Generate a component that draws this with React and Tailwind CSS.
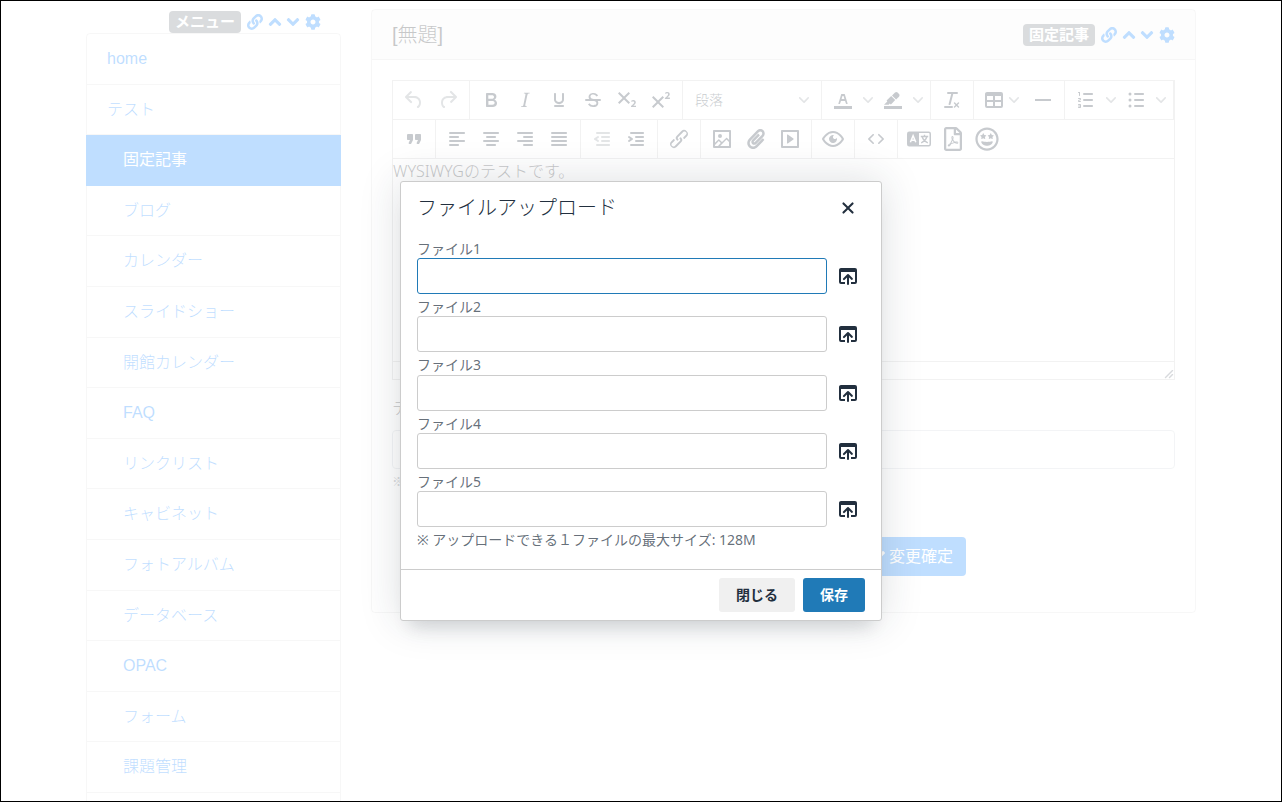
import { FaLink, FaAngleUp, FaAngleDown, FaCog, FaRegFilePdf, FaRegGrinStars, FaPaperclip, FaCheck } from "react-icons/fa";

const bar = "c.6 0 1 .4 1 1s-.4 1-1 1";

const PATHS = {
  undo: ["M6.4 8H12c3.7 0 6.2 2 6.8 5.1.6 2.7-.4 5.6-2.3 6.8a1 1 0 0 1-1-1.8c1.1-.6 1.8-2.7 1.4-4.6-.5-2.1-2.1-3.5-4.9-3.5H6.4l3.3 3.3a1 1 0 1 1-1.4 1.4l-5-5a1 1 0 0 1 0-1.4l5-5a1 1 0 0 1 1.4 1.4L6.4 8Z"],
  redo: ["M17.6 10H12c-2.8 0-4.4 1.4-4.9 3.5-.4 2 .3 4 1.4 4.6a1 1 0 1 1-1 1.8c-2-1.2-2.9-4.1-2.3-6.8.6-3 3-5.1 6.8-5.1h5.6l-3.3-3.3a1 1 0 1 1 1.4-1.4l5 5a1 1 0 0 1 0 1.4l-5 5a1 1 0 0 1-1.4-1.4l3.3-3.3Z"],
  bold: ["M7.8 19c-.3 0-.5 0-.6-.2l-.2-.5V5.7c0-.2 0-.4.2-.5l.6-.2h5c1.5 0 2.7.3 3.5 1 .7.6 1.1 1.4 1.1 2.5a3 3 0 0 1-.6 1.9c-.4.6-1 1-1.6 1.2.4.1.9.3 1.3.6s.8.7 1 1.2c.4.4.5 1 .5 1.6 0 1.3-.4 2.3-1.3 3-.8.7-2.1 1-3.8 1H7.8Zm5-8.3c.6 0 1.2-.1 1.6-.5.4-.3.6-.7.6-1.3 0-1.1-.8-1.7-2.3-1.7H9.3v3.5h3.4Zm.5 6c.7 0 1.3-.1 1.7-.4.4-.4.6-.9.6-1.5s-.2-1-.7-1.4c-.4-.3-1-.4-2-.4H9.4v3.8h4Z"],
  italic: ["m16.7 4.7-.1.9h-.3c-.6 0-1 0-1.4.3-.3.3-.4.6-.5 1.1l-2.1 9.8v.6c0 .5.4.8 1.4.8h.2l-.2.8H8l.2-.8h.2c1.1 0 1.8-.5 2-1.5l2-9.8.1-.5c0-.6-.4-.8-1.4-.8h-.3l.2-.9h5.8Z"],
  underline: ["M16 5c.6 0 1 .4 1 1v5.5a4 4 0 0 1-.4 1.8l-1 1.4a5.3 5.3 0 0 1-5.5 1 5 5 0 0 1-1.6-1c-.5-.4-.8-.9-1.1-1.4a4 4 0 0 1-.4-1.8V6c0-.6.4-1 1-1s1 .4 1 1v5.5c0 .3 0 .6.2 1l.6.7a3.3 3.3 0 0 0 2.2.8 3.4 3.4 0 0 0 2.2-.8c.3-.2.4-.5.6-.8l.2-.9V6c0-.6.4-1 1-1ZM8 17h8c.6 0 1 .4 1 1s-.4 1-1 1H8a1 1 0 0 1 0-2Z"],
  strike: [
    "M15.6 8.5c-.5-.7-1-1.1-1.3-1.3-.6-.4-1.3-.6-2-.6-2.7 0-2.8 1.7-2.8 2.1 0 1.6 1.8 2 3.2 2.3 4.4.9 4.6 2.8 4.6 3.9 0 1.4-.7 4.1-5 4.1A6.2 6.2 0 0 1 7 16.4l1.5-1.1c.4.6 1.6 2 3.7 2 1.6 0 2.5-.4 3-1.2.4-.8.3-2-.8-2.6-.7-.4-1.6-.7-2.9-1-1-.2-3.9-.8-3.9-3.6C7.6 6 10.3 5 12.4 5c2.9 0 4.2 1.6 4.7 2.4l-1.5 1.1Z",
    "M5 11h14a1 1 0 0 1 0 2H5a1 1 0 0 1 0-2Z",
  ],
  subscript: ["m10.4 10 4.6 4.6-1.4 1.4L9 11.4 4.4 16 3 14.6 7.6 10 3 5.4 4.4 4 9 8.6 13.6 4 15 5.4 10.4 10ZM21 19h-5v-1l1-.8 1.7-1.6c.3-.4.5-.8.5-1.2 0-.3 0-.6-.2-.7-.2-.2-.5-.3-.9-.3a2 2 0 0 0-.8.2l-.7.3-.4-1.1 1-.6 1.2-.2c.8 0 1.4.3 1.8.7.4.4.6.9.6 1.5s-.2 1.1-.5 1.6a8 8 0 0 1-1.3 1.3l-.6.6h2.6V19Z"],
  superscript: ["M15 9.4 10.4 14l4.6 4.6-1.4 1.4L9 15.4 4.4 20 3 18.6 7.6 14 3 9.4 4.4 8 9 12.6 13.6 8 15 9.4Zm5.9 1.6h-5v-1l1-.8 1.7-1.6c.3-.5.5-.9.5-1.3 0-.3 0-.5-.2-.7-.2-.2-.5-.3-.9-.3l-.8.2-.7.4-.4-1.2c.2-.2.5-.4 1-.5.3-.2.8-.2 1.2-.2.8 0 1.4.2 1.8.6.4.4.6 1 .6 1.6 0 .5-.2 1-.5 1.5l-1.3 1.4-.6.5h2.6V11Z"],
  textColor: [
    "M3 18h18v3H3z",
    "M8.7 16h-.8a.5.5 0 0 1-.5-.6l2.7-9c.1-.3.3-.4.5-.4h2.8c.2 0 .4.1.5.4l2.7 9a.5.5 0 0 1-.5.6h-.8a.5.5 0 0 1-.4-.4l-.7-2.2c0-.3-.3-.4-.5-.4h-3.4c-.2 0-.4.1-.5.4l-.7 2.2c0 .3-.2.4-.4.4Zm2.6-7.6-.6 2a.5.5 0 0 0 .5.6h1.6a.5.5 0 0 0 .5-.6l-.6-2c0-.3-.3-.4-.5-.4h-.4c-.2 0-.4.1-.5.4Z",
  ],
  highlight: [
    "M3 18h18v3H3z",
    "M7.7 16.7H3l3.3-3.3-.7-.8L10.2 8l4 4.1-4 4.2c-.2.2-.6.2-.8 0l-.6-.7-1.1 1.1zm5-7.5L11 7.4l3-2.9a2 2 0 0 1 2.6 0L18 6c.7.7.7 2 0 2.7l-2.9 2.9-1.8-1.8-.5-.6",
  ],
  clearFormat: ["M13.2 6a1 1 0 0 1 0 .2l-2.6 10a1 1 0 0 1-1 .8h-.2a.8.8 0 0 1-.8-1l2.6-10H8a1 1 0 1 1 0-2h9a1 1 0 0 1 0 2h-3.8ZM5 18h7a1 1 0 0 1 0 2H5a1 1 0 0 1 0-2Zm13 1.5L16.5 18 15 19.5a.7.7 0 0 1-1-1l1.5-1.5-1.5-1.5a.7.7 0 0 1 1-1l1.5 1.5 1.5-1.5a.7.7 0 0 1 1 1L17.5 17l1.5 1.5a.7.7 0 0 1-1 1Z"],
  table: ["M19 4a2 2 0 0 1 2 2v12a2 2 0 0 1-2 2H5a2 2 0 0 1-2-2V6c0-1.1.9-2 2-2h14ZM5 14v4h6v-4H5Zm14 0h-6v4h6v-4Zm0-6h-6v4h6V8ZM5 12h6V8H5v4Z"],
  rule: ["M4 11h16v2H4z"],
  ordered: [`M10 17h8${bar}h-8a1 1 0 0 1 0-2Zm0-6h8${bar}h-8a1 1 0 0 1 0-2Zm0-6h8${bar}h-8a1 1 0 1 1 0-2ZM6 4v3.5c0 .3-.2.5-.5.5a.5.5 0 0 1-.5-.5V5h-.5a.5.5 0 0 1 0-1H6Zm-1 8.8.2.2h1.3c.3 0 .5.2.5.5s-.2.5-.5.5H4.9a1 1 0 0 1-.9-1V13c0-.4.3-.8.6-1l1.2-.4.2-.3a.2.2 0 0 0-.2-.2H4.5a.5.5 0 0 1-.5-.5c0-.3.2-.5.5-.5h1.6c.5 0 .9.4.9 1v.1c0 .4-.3.8-.6 1l-1.2.4-.2.3ZM7 17v2c0 .6-.4 1-1 1H4.5a.5.5 0 0 1 0-1h1.2c.2 0 .3-.1.3-.3 0-.2-.1-.3-.3-.3H4.4a.4.4 0 1 1 0-.8h1.3c.2 0 .3-.1.3-.3 0-.2-.1-.3-.3-.3H4.5a.5.5 0 1 1 0-1H6c.6 0 1 .4 1 1Z`],
  unordered: [`M11 5h8${bar}h-8a1 1 0 0 1 0-2Zm0 6h8${bar}h-8a1 1 0 0 1 0-2Zm0 6h8${bar}h-8a1 1 0 0 1 0-2Z`, "M6 4.5a1.5 1.5 0 1 1 0 3 1.5 1.5 0 0 1 0-3Zm0 6a1.5 1.5 0 1 1 0 3 1.5 1.5 0 0 1 0-3Zm0 6a1.5 1.5 0 1 1 0 3 1.5 1.5 0 0 1 0-3Z"],
  quote: ["M7.5 17h.9c.4 0 .7-.2.9-.6L11 13V8c0-.6-.4-1-1-1H6a1 1 0 0 0-1 1v4c0 .6.4 1 1 1h2l-1.3 2.7a1 1 0 0 0 .8 1.3Zm8 0h.9c.4 0 .7-.2.9-.6L19 13V8c0-.6-.4-1-1-1h-4a1 1 0 0 0-1 1v4c0 .6.4 1 1 1h2l-1.3 2.7a1 1 0 0 0 .8 1.3Z"],
  alignLeft: [`M5 5h14${bar}H5a1 1 0 1 1 0-2Zm0 4h8${bar}H5a1 1 0 1 1 0-2Zm0 8h8${bar}H5a1 1 0 0 1 0-2Zm0-4h14${bar}H5a1 1 0 0 1 0-2Z`],
  alignCenter: [`M5 5h14${bar}H5a1 1 0 1 1 0-2Zm3 4h8${bar}H8a1 1 0 1 1 0-2Zm0 8h8${bar}H8a1 1 0 0 1 0-2Zm-3-4h14${bar}H5a1 1 0 0 1 0-2Z`],
  alignRight: [`M5 5h14${bar}H5a1 1 0 1 1 0-2Zm6 4h8${bar}h-8a1 1 0 0 1 0-2Zm0 8h8${bar}h-8a1 1 0 0 1 0-2Zm-6-4h14${bar}H5a1 1 0 0 1 0-2Z`],
  alignJustify: [`M5 5h14${bar}H5a1 1 0 1 1 0-2Zm0 4h14${bar}H5a1 1 0 1 1 0-2Zm0 4h14${bar}H5a1 1 0 0 1 0-2Zm0 4h14${bar}H5a1 1 0 0 1 0-2Z`],
  outdent: [`M7 5h12${bar}H7a1 1 0 1 1 0-2Zm5 4h7${bar}h-7a1 1 0 0 1 0-2Zm0 4h7${bar}h-7a1 1 0 0 1 0-2Zm-5 4h12${bar}H7a1 1 0 0 1 0-2Zm1.6-3.8a1 1 0 0 1-1.2 1.6l-3-2a1 1 0 0 1 0-1.6l3-2a1 1 0 0 1 1.2 1.6L6.8 12l1.8 1.2Z`],
  indent: [`M7 5h12${bar}H7a1 1 0 1 1 0-2Zm5 4h7${bar}h-7a1 1 0 0 1 0-2Zm0 4h7${bar}h-7a1 1 0 0 1 0-2Zm-5 4h12${bar}H7a1 1 0 0 1 0-2Zm-2.6-3.8L6.2 12l-1.8-1.2a1 1 0 0 1 1.2-1.6l3 2a1 1 0 0 1 0 1.6l-3 2a1 1 0 1 1-1.2-1.6Z`],
  link: ["M6.2 12.3a1 1 0 0 1 1.4 1.4l-2 2a2 2 0 1 0 2.6 2.8l4.8-4.8a1 1 0 0 0 0-1.4 1 1 0 1 1 1.4-1.3 2.9 2.9 0 0 1 0 4L9.6 20a3.9 3.9 0 0 1-5.5-5.5l2-2Zm11.6-.6a1 1 0 0 1-1.4-1.4l2-2a2 2 0 1 0-2.6-2.8L11 10.3a1 1 0 0 0 0 1.4A1 1 0 1 1 9.6 13a2.9 2.9 0 0 1 0-4L14.4 4a3.9 3.9 0 0 1 5.5 5.5l-2 2Z"],
  image: ["m5 15.7 3.3-3.2c.3-.3.7-.3 1 0L12 15l4.1-4c.3-.4.8-.4 1 0l2 1.9V5H5v10.7ZM5 18V19h3l2.8-2.9-2-2L5 17.9Zm14-3-2.5-2.4-6.4 6.5H19v-4ZM4 3h16c.6 0 1 .4 1 1v16c0 .6-.4 1-1 1H4a1 1 0 0 1-1-1V4c0-.6.4-1 1-1Zm6 8a2 2 0 1 0 0-4 2 2 0 0 0 0 4Z"],
  media: ["M4 3h16c.6 0 1 .4 1 1v16c0 .6-.4 1-1 1H4a1 1 0 0 1-1-1V4c0-.6.4-1 1-1Zm1 2v14h14V5H5Zm4.8 2.6 5.6 4a.5.5 0 0 1 0 .8l-5.6 4A.5.5 0 0 1 9 16V8a.5.5 0 0 1 .8-.4Z"],
  preview: ["M3.5 12.5c.5.8 1.1 1.6 1.8 2.3 2 2 4.2 3.2 6.7 3.2s4.7-1.2 6.7-3.2a16.2 16.2 0 0 0 2.1-2.8 15.7 15.7 0 0 0-2.1-2.8c-2-2-4.2-3.2-6.7-3.2a9.3 9.3 0 0 0-6.7 3.2A16.2 16.2 0 0 0 3.2 12c0 .2.2.3.3.5Zm-2.4-1 .7-1.2L4 7.8C6.2 5.4 8.9 4 12 4c3 0 5.8 1.4 8.1 3.8a18.2 18.2 0 0 1 2.8 3.7v1l-.7 1.2-2.1 2.5c-2.3 2.4-5 3.8-8.1 3.8-3 0-5.8-1.4-8.1-3.8a18.2 18.2 0 0 1-2.8-3.7 1 1 0 0 1 0-1Zm12-3.3a2 2 0 1 0 2.7 2.6 4 4 0 1 1-2.6-2.6Z"],
  code: ["M9.8 15.7c.3.3.3.8 0 1-.3.4-.9.4-1.2 0l-4.4-4.1a.8.8 0 0 1 0-1.2l4.4-4.2c.3-.3.9-.3 1.2 0 .3.3.3.8 0 1.1L6 12l3.8 3.7ZM14.2 15.7c-.3.3-.3.8 0 1 .4.4.9.4 1.2 0l4.4-4.1c.3-.3.3-.9 0-1.2l-4.4-4.2a.8.8 0 0 0-1.2 0c-.3.3-.3.8 0 1.1L18 12l-3.8 3.7Z"],
  close: ["M17.3 8.2 13.4 12l3.9 3.8a1 1 0 0 1-1.5 1.5L12 13.4l-3.8 3.9a1 1 0 0 1-1.5-1.5l3.9-3.8-3.9-3.8a1 1 0 0 1 1.5-1.5l3.8 3.9 3.8-3.9a1 1 0 0 1 1.5 1.5Z"],
  browse: ["M19 4a2 2 0 0 1 2 2v12a2 2 0 0 1-2 2h-4v-2h4V8H5v10h4v2H5a2 2 0 0 1-2-2V6c0-1.1.9-2 2-2h14Zm-8 9.4-2.3 2.3a1 1 0 1 1-1.4-1.4l4-4a1 1 0 0 1 1.4 0l4 4a1 1 0 0 1-1.4 1.4L13 13.4V20a1 1 0 0 1-2 0v-6.6Z"],
};

function Icon({ name }) {
  return (
    <svg width="24" height="24" viewBox="0 0 24 24" fill="currentColor" fillRule="evenodd" aria-hidden="true" className="shrink-0">
      {PATHS[name].map((d) => (
        <path key={d} d={d} />
      ))}
    </svg>
  );
}

function TranslateIcon() {
  return (
    <svg width="24" height="24" viewBox="0 0 24 24" fill="none" aria-hidden="true" className="shrink-0">
      <rect x="0.75" y="5.25" width="22.5" height="13.5" rx="1.5" stroke="currentColor" strokeWidth="1.5" />
      <path d="M1 5h11v14H1z" fill="currentColor" />
      <path d="M3.4 15.2 6.1 8.8l2.7 6.4M4.4 13.2h3.4" stroke="white" strokeWidth="1.5" />
      <path d="M13.8 9.5h7.4M17.5 7.8v1.7M19.8 9.8c-.8 2.9-2.8 4.9-5.6 6M15.2 9.8c.8 2.9 2.8 4.9 5.6 6" stroke="currentColor" strokeWidth="1.4" />
    </svg>
  );
}

function Chevron() {
  return (
    <svg width="10" height="10" viewBox="0 0 10 10" fill="currentColor" aria-hidden="true" className="shrink-0 opacity-50">
      <path d="M8.7 2.2c.3-.3.8-.3 1 0 .4.4.4.9 0 1.2L5.7 7.8c-.3.3-.9.3-1.2 0L.2 3.4a.8.8 0 0 1 0-1.2c.3-.3.8-.3 1.1 0L5 6l3.7-3.8Z" />
    </svg>
  );
}

function Tool({ label, name, disabled, children }) {
  return (
    <button
      type="button"
      aria-label={label}
      disabled={disabled}
      className="flex h-[34px] w-[34px] items-center justify-center disabled:opacity-50"
    >
      {name ? <Icon name={name} /> : children}
    </button>
  );
}

function SplitTool({ label, name }) {
  return (
    <div className="flex">
      <Tool label={label} name={name} />
      <button type="button" aria-label={`${label}メニュー`} className="flex w-4 items-center justify-center">
        <Chevron />
      </button>
    </div>
  );
}

function Group({ last, children }) {
  return (
    <div className={`flex items-center px-1 ${last ? "" : "border-r border-[#ccc]"}`}>{children}</div>
  );
}

function Toolbar() {
  return (
    <div className="text-[#222f3e]">
      <div className="flex h-[39px] border-b border-[#ccc]">
        <Group>
          <Tool label="元に戻す" name="undo" disabled />
          <Tool label="やり直す" name="redo" disabled />
        </Group>
        <Group>
          <Tool label="太字" name="bold" />
          <Tool label="斜体" name="italic" />
          <Tool label="下線" name="underline" />
          <Tool label="取り消し線" name="strike" />
          <Tool label="下付き文字" name="subscript" />
          <Tool label="上付き文字" name="superscript" />
        </Group>
        <Group>
          <button type="button" className="flex h-[34px] w-[130px] items-center justify-between px-2 text-sm font-light">
            段落
            <Chevron />
          </button>
        </Group>
        <Group>
          <SplitTool label="文字色" name="textColor" />
          <SplitTool label="背景色" name="highlight" />
        </Group>
        <Group>
          <Tool label="書式をクリア" name="clearFormat" />
        </Group>
        <Group>
          <button type="button" aria-label="表" className="flex h-[34px] w-12 items-center gap-[3px] pl-1">
            <Icon name="table" />
            <Chevron />
          </button>
          <Tool label="水平線" name="rule" />
        </Group>
        <Group>
          <SplitTool label="番号付き箇条書き" name="ordered" />
          <SplitTool label="箇条書き" name="unordered" />
        </Group>
      </div>
      <div className="flex h-[39px] border-b border-[#ccc]">
        <Group>
          <Tool label="引用" name="quote" />
        </Group>
        <Group>
          <Tool label="左揃え" name="alignLeft" />
          <Tool label="中央揃え" name="alignCenter" />
          <Tool label="右揃え" name="alignRight" />
          <Tool label="両端揃え" name="alignJustify" />
        </Group>
        <Group>
          <Tool label="インデントを減らす" name="outdent" disabled />
          <Tool label="インデント" name="indent" />
        </Group>
        <Group>
          <Tool label="リンク" name="link" />
        </Group>
        <Group>
          <Tool label="画像" name="image" />
          <Tool label="ファイル">
            <FaPaperclip size={20} />
          </Tool>
          <Tool label="メディア" name="media" />
        </Group>
        <Group>
          <Tool label="プレビュー" name="preview" />
        </Group>
        <Group>
          <Tool label="ソースコード" name="code" />
        </Group>
        <Group last>
          <Tool label="翻訳">
            <TranslateIcon />
          </Tool>
          <Tool label="PDF">
            <FaRegFilePdf size={24} />
          </Tool>
          <Tool label="絵文字">
            <FaRegGrinStars size={24} />
          </Tool>
        </Group>
      </div>
    </div>
  );
}

function FrameControls({ label }) {
  return (
    <div className="flex items-center gap-[6px] text-[#007bff]">
      <span className="rounded bg-[#6c757d] px-[6px] text-[15px] leading-[22px] font-bold text-white">{label}</span>
      <div className="flex items-center gap-[2px]">
        <a href="#link" aria-label="リンク"><FaLink size={16} /></a>
        <div className="flex -space-x-[2px]">
          <a href="#up" aria-label="上へ"><FaAngleUp size={20} /></a>
          <a href="#down" aria-label="下へ"><FaAngleDown size={20} /></a>
        </div>
        <a href="#settings" aria-label="設定"><FaCog size={16} /></a>
      </div>
    </div>
  );
}

const MENU = [
  { label: "home", top: true },
  { label: "テスト", top: true },
  { label: "固定記事", active: true },
  { label: "ブログ" },
  { label: "カレンダー" },
  { label: "スライドショー" },
  { label: "開館カレンダー" },
  { label: "FAQ" },
  { label: "リンクリスト" },
  { label: "キャビネット" },
  { label: "フォトアルバム" },
  { label: "データベース" },
  { label: "OPAC" },
  { label: "フォーム" },
  { label: "課題管理" },
];

function itemStyle(item) {
  if (item.active) return "-mx-px border-[#007bff] bg-[#007bff] pl-[37px] text-white";
  return `border-black/12 font-light text-[#007bff] ${item.top ? "pl-5" : "pl-9"}`;
}

function Sidebar() {
  return (
    <aside className="w-1/4 px-[15px] pt-[10px]">
      <div className="flex h-[22px] items-center justify-end pr-5">
        <FrameControls label="メニュー" />
      </div>
      <nav className="rounded-t border border-black/12 pb-12">
        {MENU.map((item) => (
          <a key={item.label} href={`#${item.label}`} className={`block border-b py-3 leading-[1.6] ${itemStyle(item)}`}>
            {item.label}
          </a>
        ))}
      </nav>
    </aside>
  );
}

function Article() {
  return (
    <main className="w-3/4 px-[15px] pt-2">
      <section className="rounded border border-black/12">
        <header className="flex h-[50px] items-center justify-between border-b border-black/12 bg-black/3 px-5">
          <h1 className="text-xl font-light">[無題]</h1>
          <FrameControls label="固定記事" />
        </header>
        <div className="p-5">
          <div className="border border-[#ccc]">
            <Toolbar />
            <div className="h-[202px] font-['Noto_Sans','Noto_Sans_CJK_JP',sans-serif] leading-6 font-light">WYSIWYGのテストです。</div>
            <div className="flex h-[18px] items-end justify-end border-t border-[#ccc] text-[#222f3e]/70">
              <svg width="10" height="10" viewBox="0 0 10 10" fill="currentColor" aria-hidden="true">
                <path d="M8.1 1.1A.5.5 0 1 1 9 2l-7 7A.5.5 0 1 1 1 8l7-7ZM8.1 5.1A.5.5 0 1 1 9 6l-3 3A.5.5 0 1 1 5 8l3-3Z" />
              </svg>
            </div>
          </div>
          <label htmlFor="theme" className="mt-4 mb-2 block leading-[26px] font-light">テーマ</label>
          <input id="theme" type="text" className="block h-[39px] w-full rounded border border-[#ced4da] px-3" />
          <p className="text-[13px] leading-[26px] font-light text-[#6c757d]">※</p>
          <div className="mt-[42px] mb-4 flex justify-end pr-[209px]">
            <button type="button" className="flex h-[39px] items-center gap-1 rounded bg-[#007bff] px-[13px] text-white">
              <FaCheck size={16} />
              変更確定
            </button>
          </div>
        </div>
      </section>
    </main>
  );
}

const FILES = [1, 2, 3, 4, 5];

function UploadDialog() {
  return (
    <div className="absolute inset-0 flex items-center justify-center bg-white/75">
      <div
        role="dialog"
        aria-labelledby="dialog-title"
        className="w-[482px] rounded-[3px] border border-[#ccc] bg-white font-['Noto_Sans','Noto_Sans_CJK_JP',sans-serif] text-[#222f3e] shadow-[0_16px_16px_-10px_rgba(34,47,62,0.15),0_0_40px_1px_rgba(34,47,62,0.15)]"
      >
        <div className="flex items-center justify-between px-4 pt-2">
          <h2 id="dialog-title" className="text-xl leading-9 font-light">ファイルアップロード</h2>
          <button type="button" aria-label="閉じる" className="flex h-[34px] w-[34px] items-center justify-center">
            <Icon name="close" />
          </button>
        </div>
        <form className="flex flex-col gap-1 px-4 pt-[14px] pb-5 text-sm leading-[1.3] text-[#222f3e]/70">
          {FILES.map((n) => (
            <div key={n}>
              <label htmlFor={`file-${n}`} className="block">ファイル{n}</label>
              <div className="flex items-center gap-1">
                <input
                  id={`file-${n}`}
                  type="text"
                  className={`h-9 min-w-0 flex-1 rounded-[3px] border px-1 outline-none ${n === 1 ? "border-[#207ab7]" : "border-[#ccc]"}`}
                />
                <button type="button" aria-label={`ファイル${n}を選択`} className="flex h-[34px] w-[34px] items-center justify-center text-[#222f3e]">
                  <Icon name="browse" />
                </button>
              </div>
            </div>
          ))}
          <p>※ アップロードできる１ファイルの最大サイズ: 128M</p>
        </form>
        <div className="flex justify-end gap-2 border-t border-[#ccc] px-4 py-2 text-sm font-bold">
          <button type="button" className="h-[34px] rounded-[3px] bg-[#f0f0f0] px-[17px]">閉じる</button>
          <button type="button" className="h-[34px] rounded-[3px] bg-[#207ab7] px-[17px] text-white">保存</button>
        </div>
      </div>
    </div>
  );
}

export default function App() {
  return (
    <div className="relative h-screen overflow-hidden border border-black bg-white font-['Liberation_Sans','Noto_Sans_CJK_JP',sans-serif] text-base text-[#212529]">
      <div className="mx-auto flex max-w-[1140px] items-start">
        <Sidebar />
        <Article />
      </div>
      <UploadDialog />
    </div>
  );
}
